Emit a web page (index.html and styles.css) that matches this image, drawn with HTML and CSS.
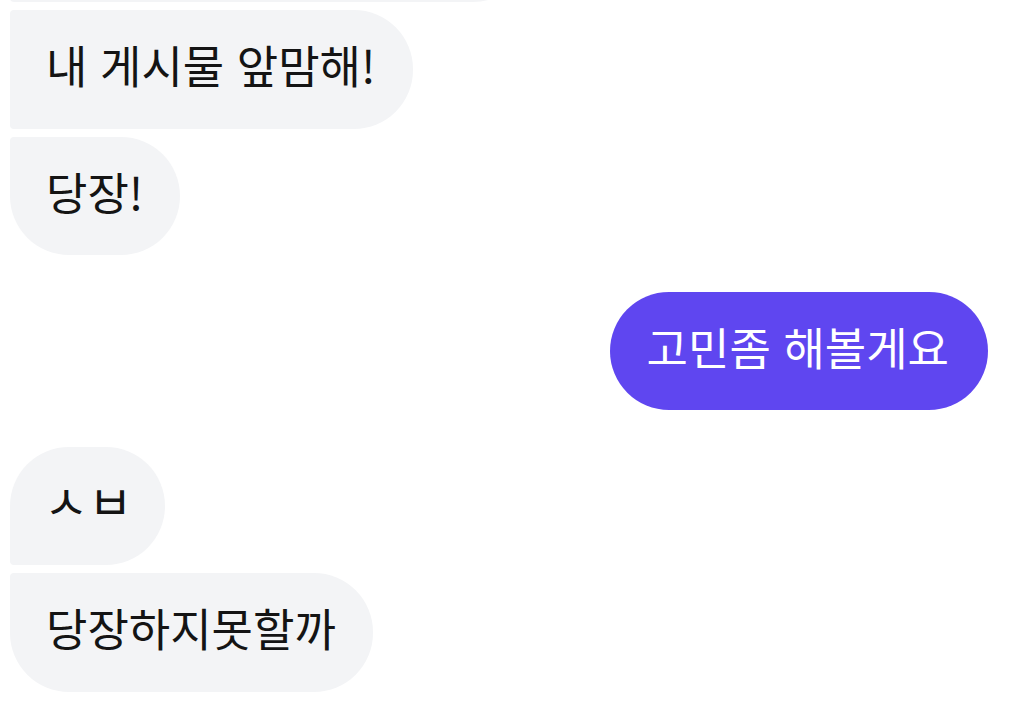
FILE: index.html
```html
<!DOCTYPE html>
<html lang="ko">
<head>
<meta charset="utf-8">
<link rel="stylesheet" href="styles.css">
</head>
<body>
<div class="chat">
  <div class="group group-in group-first">
    <div class="bubble in top-cut"></div>
    <div class="bubble in">내 게시물 앞맘해!</div>
    <div class="bubble in last">당장!</div>
  </div>
  <div class="group group-out">
    <div class="bubble out">고민좀 해볼게요</div>
  </div>
  <div class="group group-in">
    <div class="bubble in first jamo-bubble"><span class="jamo">ㅅ</span><span class="jamo">ㅂ</span></div>
    <div class="bubble in last">당장하지못할까</div>
  </div>
</div>
</body>
</html>
```
FILE: styles.css
```css
html, body {
  margin: 0;
  padding: 0;
  background: #ffffff;
}
body {
  width: 1012px;
  height: 702px;
  overflow: hidden;
  font-family: "Noto Sans CJK KR", "Noto Sans", sans-serif;
}
.chat {
  display: flex;
  flex-direction: column;
  gap: 36.5px;
  padding: 0 24px 0 10px;
}
.group {
  display: flex;
  flex-direction: column;
  gap: 8px;
}
.group-in { align-items: flex-start; }
.group-out { align-items: flex-end; }
.group-first { margin-top: -116.5px; }
.bubble {
  box-sizing: border-box;
  height: 118.5px;
  display: flex;
  align-items: center;
  padding: 0 37px 9px 36px;
  font-size: 45px;
  line-height: 1;
  color: #141414;
  white-space: nowrap;
}
.in {
  background: #f3f4f6;
  border-radius: 4px 59px 59px 4px;
}
.in.first { border-radius: 59px 59px 59px 4px; }
.in.last { border-radius: 4px 59px 59px 59px; }
.top-cut {
  width: 522px;
  border-radius: 59px 59px 59px 4px;
}
.out {
  background: #5f46f0;
  color: #ffffff;
  border-radius: 59.25px;
  padding: 0 39px 9px 37px;
}
.jamo-bubble {
  gap: 0;
  padding: 0 33px 14px 34px;
}
.jamo {
  font-size: 48px;
  font-weight: 400;
}
```
